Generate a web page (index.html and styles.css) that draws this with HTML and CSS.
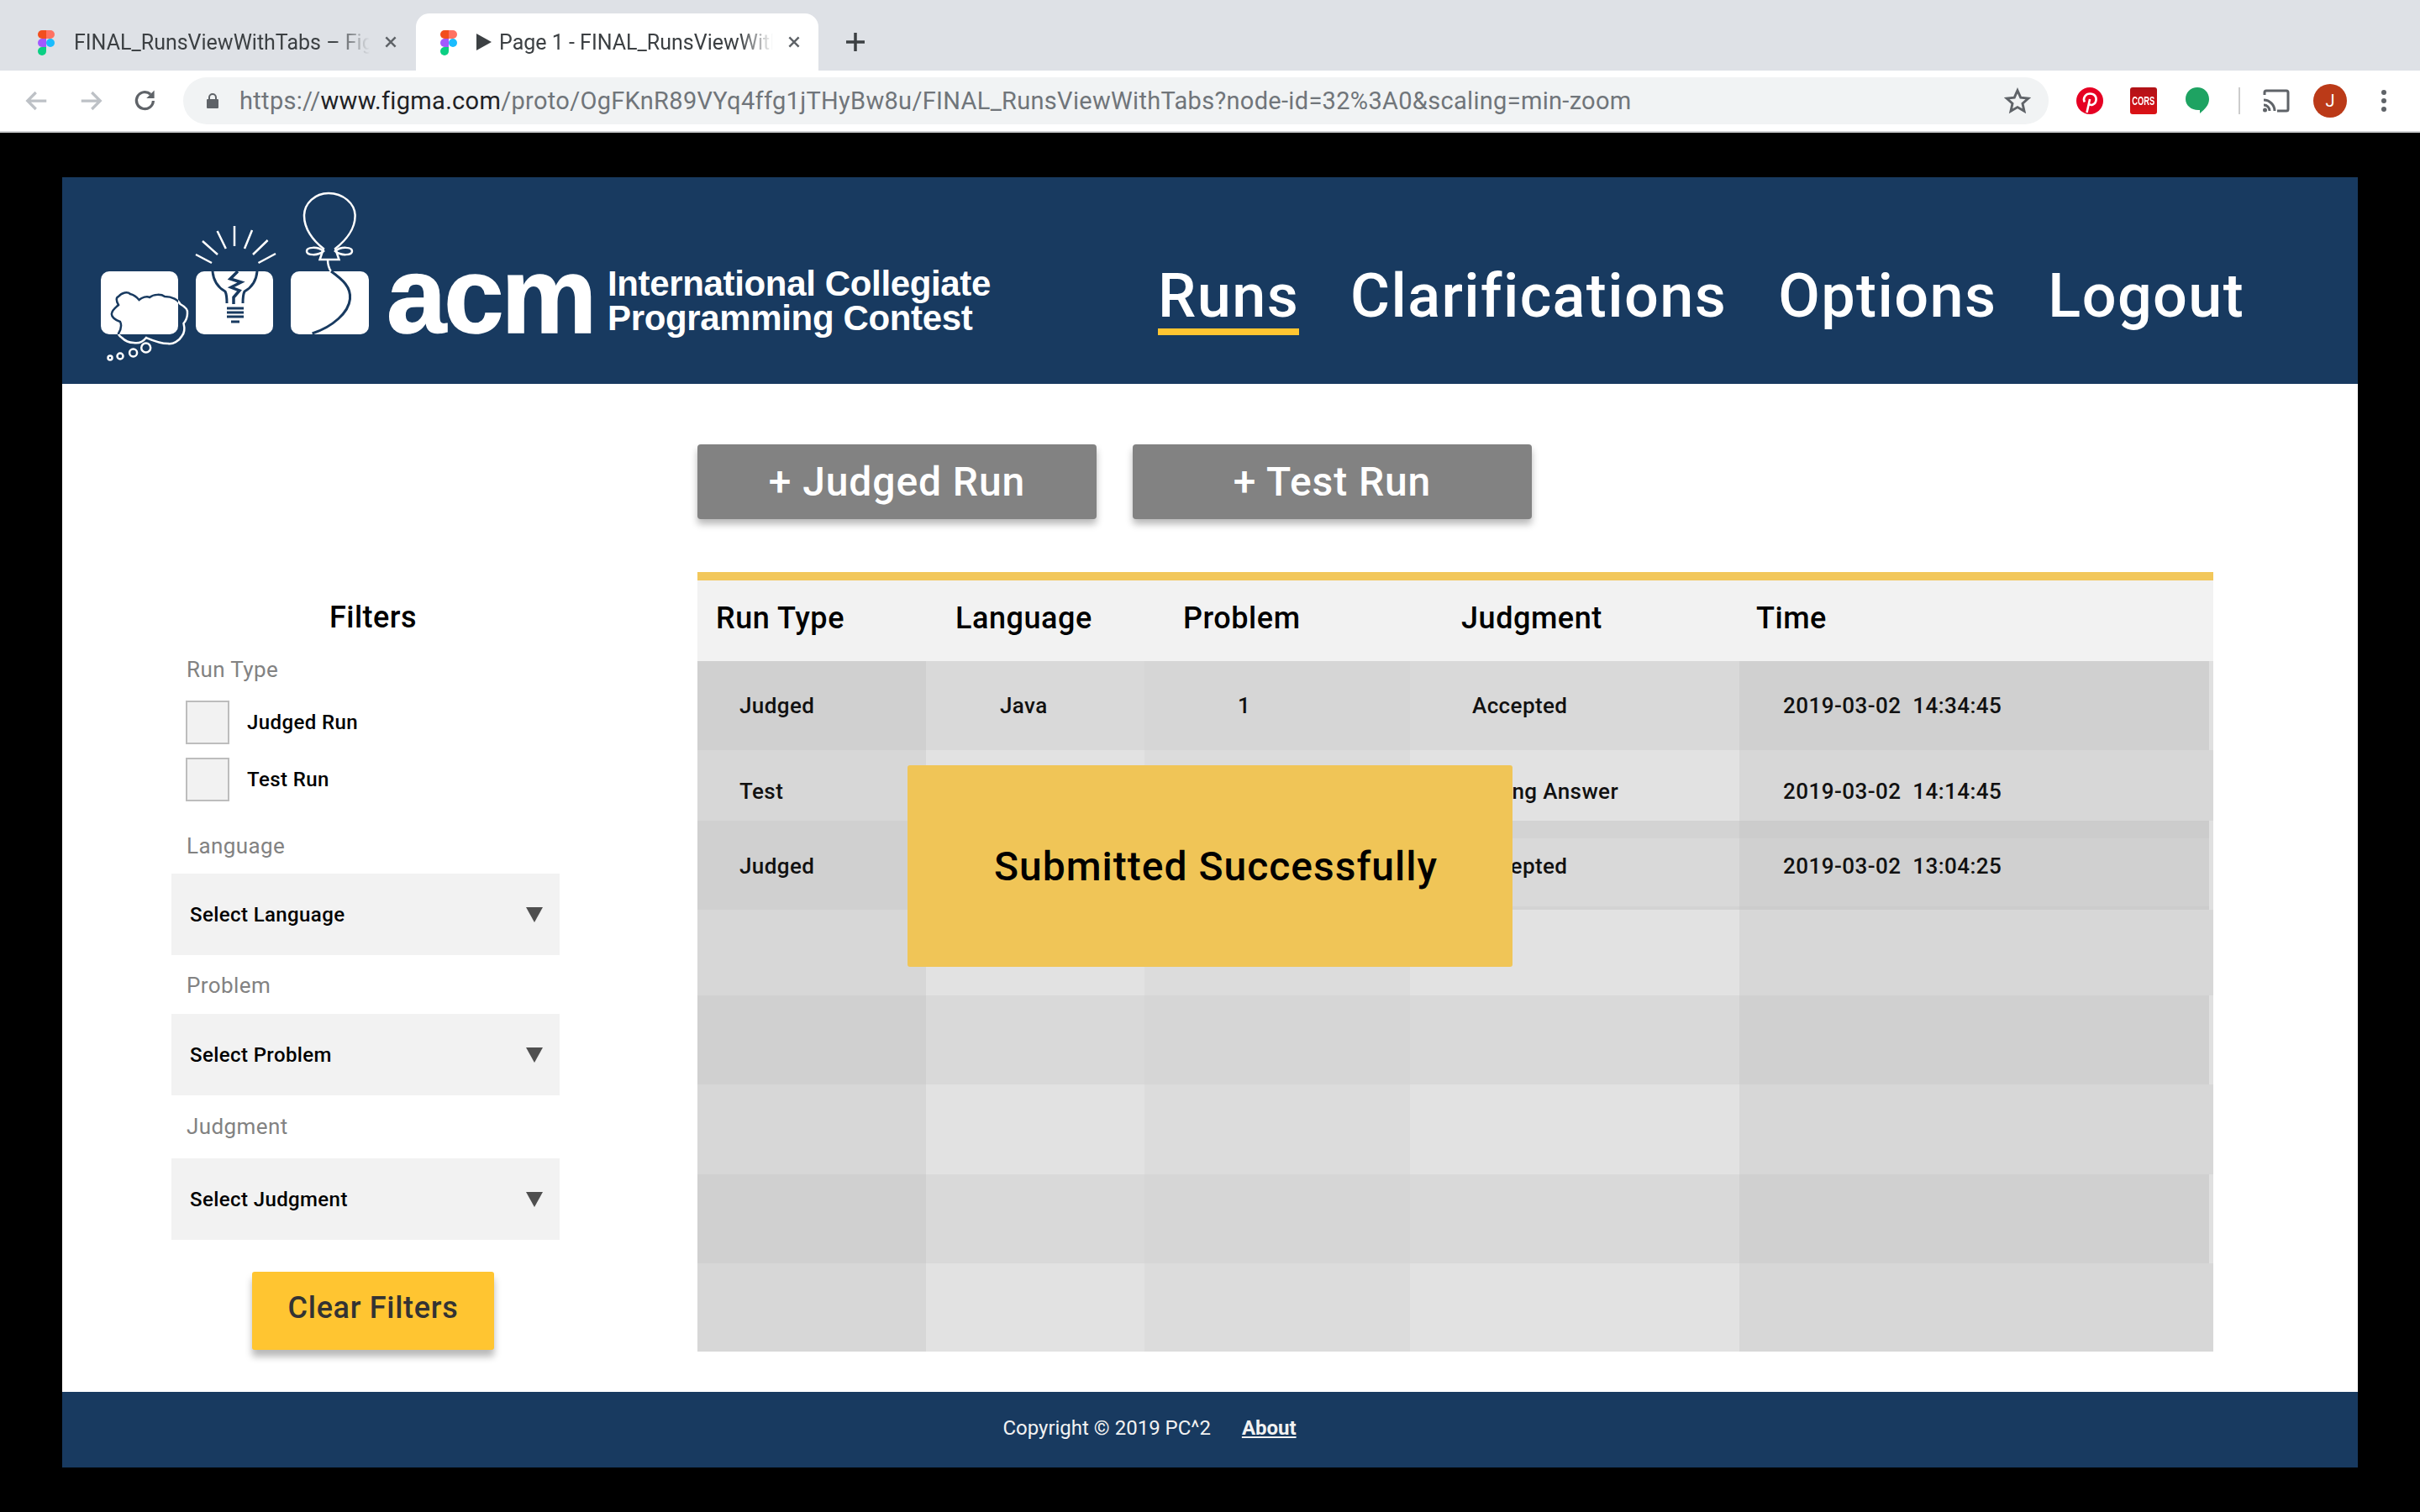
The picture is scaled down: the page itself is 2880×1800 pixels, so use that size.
FILE: index.html
```html
<!DOCTYPE html>
<html lang="en">
<head>
<meta charset="utf-8">
<title>Page 1 - FINAL_RunsViewWithTabs</title>
<link rel="stylesheet" href="styles.css">
</head>
<body>
<div class="tabstrip">
  <div class="tab">
    <svg class="figma" viewBox="0 0 20 30"><path fill="#f24e1e" d="M5 0h5v10H5a5 5 0 0 1 0-10z"/><path fill="#ff7262" d="M10 0h5a5 5 0 0 1 0 10h-5z"/><path fill="#a259ff" d="M5 10h5v10H5a5 5 0 0 1 0-10z"/><circle fill="#1abcfe" cx="15" cy="15" r="5"/><path fill="#0acf83" d="M5 20h5v5a5 5 0 1 1-5-5z"/></svg>
    <span class="tab-title fade">FINAL_RunsViewWithTabs – Figma</span>
    <svg class="close" viewBox="0 0 16 16"><path d="M3 3l10 10M13 3L3 13"/></svg>
  </div>
  <div class="tab active">
    <svg class="figma" viewBox="0 0 20 30"><path fill="#f24e1e" d="M5 0h5v10H5a5 5 0 0 1 0-10z"/><path fill="#ff7262" d="M10 0h5a5 5 0 0 1 0 10h-5z"/><path fill="#a259ff" d="M5 10h5v10H5a5 5 0 0 1 0-10z"/><circle fill="#1abcfe" cx="15" cy="15" r="5"/><path fill="#0acf83" d="M5 20h5v5a5 5 0 1 1-5-5z"/></svg>
    <svg class="play" viewBox="0 0 18 20"><path d="M0 0l18 10L0 20z"/></svg>
    <span class="tab-title active-title fade">Page 1 - FINAL_RunsViewWithTabs</span>
    <svg class="close" viewBox="0 0 16 16"><path d="M3 3l10 10M13 3L3 13"/></svg>
  </div>
  <svg class="newtab" viewBox="0 0 24 24"><path d="M12 1v22M1 12h22"/></svg>
</div>
<div class="toolbar">
  <svg class="nav-ic first" viewBox="0 0 24 24"><path d="M21 12H4M11 4l-8 8 8 8"/></svg>
  <svg class="nav-ic" viewBox="0 0 24 24"><path d="M3 12h17M13 4l8 8-8 8"/></svg>
  <svg class="nav-ic dark" viewBox="0 0 24 24"><path d="M19.500 12a8 8 0 1 1-2.600-6.200"/><path class="solid" d="M20.500 2v7.500H13z"/></svg>
  <div class="omnibox">
    <svg class="lock" viewBox="0 0 14 18"><path d="M2 7V5a5 5 0 0 1 10 0v2h1a1 1 0 0 1 1 1v9a1 1 0 0 1-1 1H1a1 1 0 0 1-1-1V8a1 1 0 0 1 1-1zm2 0h6V5a3 3 0 0 0-6 0z"/></svg>
    <div class="url">https://<b>www.figma.com</b>/proto/OgFKnR89VYq4ffg1jTHyBw8u/FINAL_RunsViewWithTabs?node-id=32%3A0&amp;scaling=min-zoom</div>
    <svg class="star" viewBox="0 0 24 24"><path d="M12 2.800l2.800 6.300 6.800.7-5.100 4.600 1.500 6.800-6-3.500-6 3.500 1.500-6.800-5.100-4.600 6.800-.7z"/></svg>
  </div>
  <div class="exts">
    <svg class="ext" viewBox="0 0 32 32"><circle cx="16" cy="16" r="16" fill="#e60023"/><path d="M12.500 30l3.600-16M9.800 17.500c-2.500-5.500 1.500-10 6.600-10 5 0 8 3.500 7 8.500-1 4.500-6 6.500-8.500 3.500" fill="none" stroke="#fff" stroke-width="2.600"/></svg>
    <div class="cors"><span>CORS</span></div>
    <svg class="ext" viewBox="0 0 32 32"><path fill="#1ea362" d="M16 0c8 0 14 6 14 14 0 7-5 12-11 17v-4C10 28 2 22 2 14 2 6 8 0 16 0z"/></svg>
    <div class="sep"></div>
    <svg class="cast" viewBox="0 0 32 28"><path class="cast-line" d="M2 7V4a2 2 0 0 1 2-2h24a2 2 0 0 1 2 2v20a2 2 0 0 1-2 2H17"/><path class="cast-line" d="M1 13c7 0 13 6 13 13M1 19c4 0 7 3 7 7"/><circle cx="2.500" cy="25" r="2.500" fill="#5f6368"/></svg>
    <div class="avatar">J</div>
    <div class="kebab"><i></i><i></i><i></i></div>
  </div>
</div>

<div class="artboard">
  <header class="site-head">
    <div class="logo">
      <svg class="logo-art" viewBox="0 0 340 220">
        <defs><clipPath id="box1"><rect x="10" y="103" width="92" height="75" rx="10"/></clipPath></defs>
        <path class="logo-line" d="M31 177C34 172 35 167 33 163 27 161 22 157 23 153 24 148 28 146 31 143 28 138 28 134 31 133 35 128 42 127 45 130 50 131 53 134 55.500 137 59 134 65 132 68 134 73 130 82 130 86 133 95 133 102 137 104.500 142 110 145 114 149 113 153 113 158 111 162 108.500 165 110 171 109 177 106.500 180 103 186 96 190 90 189 80 189 71 185 64 182 60 187 54 189 49 188 43 188 38 185 35 182 32 180 31 178 31 177Z"/>
        <rect class="logo-fill" x="10" y="103" width="92" height="75" rx="10"/>
        <rect class="logo-fill" x="123" y="103" width="92" height="75" rx="10"/>
        <rect class="logo-fill" x="236" y="103" width="93" height="75" rx="10"/>
        <path class="logo-ink thin" clip-path="url(#box1)" d="M31 177C34 172 35 167 33 163 27 161 22 157 23 153 24 148 28 146 31 143 28 138 28 134 31 133 35 128 42 127 45 130 50 131 53 134 55.500 137 59 134 65 132 68 134 73 130 82 130 86 133 95 133 102 137 104.500 142 110 145 114 149 113 153 113 158 111 162 108.500 165 110 171 109 177 106.500 180 103 186 96 190 90 189 80 189 71 185 64 182 60 187 54 189 49 188 43 188 38 185 35 182 32 180 31 178 31 177Z"/>
        <g class="logo-line">
          <circle cx="63.700" cy="194" r="5.500"/><circle cx="48.600" cy="200" r="4.500"/><circle cx="33" cy="204" r="3.500"/><circle cx="21" cy="206" r="2.500"/>
          <path d="M169 49v24M148.600 55l10.200 21M190 54l-9 22M131 67l18 16M208.600 66l-17.600 17M123 83l19 10M218 82l-20.500 11"/>
          <path d="M281 10C265 10 252 22 252 37 252 52 262 66 275 76L270.600 89H293.500L289 76C302 66 312.600 52 312.600 37 312.600 22 298 10 281 10Z"/>
          <path d="M275 79C268 73 255 74 255 79 255 84 268 85 275 79ZM289 79C296 73 309 74 309 79 309 84 296 85 289 79Z"/>
          <path d="M280 89C280 94 281 99 284 103"/>
        </g>
        <path class="logo-ink" d="M143 103C144 115 151 123 158 127 160 131 160 136 160 141M196 103C195 115 188 123 181 127 179 131 179 136 179 141"/>
        <path class="logo-ink bold" d="M173 103L164 112 177 116 165 122 175 126 168 134 168 142"/>
        <path class="logo-ink" d="M160 147H180M160 152H180M160 157H180M165 163H175"/>
        <path class="logo-ink" d="M284 103C298 113 308 122 306.500 136 305 152 286 169 261.600 177"/>
      </svg>
      <div class="acm">acm</div>
      <div class="contest"><span>International Collegiate</span><span>Programming Contest</span></div>
    </div>
    <nav class="tabs">
      <a class="tablink current">Runs</a>
      <a class="tablink">Clarifications</a>
      <a class="tablink">Options</a>
      <a class="tablink">Logout</a>
    </nav>
  </header>

  <main class="body">
    <aside class="filters">
      <h2 class="filters-title">Filters</h2>
      <div class="flabel first-label">Run Type</div>
      <label class="check"><span class="box"></span>Judged Run</label>
      <label class="check"><span class="box"></span>Test Run</label>
      <div class="flabel lang-label">Language</div>
      <div class="select">Select Language<span class="caret"></span></div>
      <div class="flabel prob-label">Problem</div>
      <div class="select">Select Problem<span class="caret"></span></div>
      <div class="flabel judg-label">Judgment</div>
      <div class="select">Select Judgment<span class="caret"></span></div>
      <button class="clear">Clear Filters</button>
    </aside>

    <section class="content">
      <div class="actions">
        <button class="action">+ Judged Run</button>
        <button class="action">+ Test Run</button>
      </div>
      <div class="table">
        <div class="row head"><div class="c c1">Run Type</div><div class="c c2">Language</div><div class="c c3">Problem</div><div class="c c4">Judgment</div><div class="c c5">Time</div></div>
        <div class="row dark r106"><div class="c c1">Judged</div><div class="c c2">Java</div><div class="c c3">1</div><div class="c c4">Accepted</div><div class="c c5">2019-03-02&nbsp; 14:34:45</div></div>
        <div class="row light r84 lower"><div class="c c1">Test</div><div class="c c2">Java</div><div class="c c3">1</div><div class="c c4">Wrong Answer</div><div class="c c5">2019-03-02&nbsp; 14:14:45</div></div>
        <div class="row band r21"><div class="c c1"></div><div class="c c2"></div><div class="c c3"></div><div class="c c4"></div><div class="c c5"></div></div>
        <div class="row dark r81 upper"><div class="c c1">Judged</div><div class="c c2">Java</div><div class="c c3">2</div><div class="c c4">Accepted</div><div class="c c5">2019-03-02&nbsp; 13:04:25</div></div>
        <div class="row band r4"><div class="c c1"></div><div class="c c2"></div><div class="c c3"></div><div class="c c4"></div><div class="c c5"></div></div>
        <div class="row light r102"><div class="c c1"></div><div class="c c2"></div><div class="c c3"></div><div class="c c4"></div><div class="c c5"></div></div>
        <div class="row dark r106"><div class="c c1"></div><div class="c c2"></div><div class="c c3"></div><div class="c c4"></div><div class="c c5"></div></div>
        <div class="row light r107"><div class="c c1"></div><div class="c c2"></div><div class="c c3"></div><div class="c c4"></div><div class="c c5"></div></div>
        <div class="row dark r106"><div class="c c1"></div><div class="c c2"></div><div class="c c3"></div><div class="c c4"></div><div class="c c5"></div></div>
        <div class="row light r105"><div class="c c1"></div><div class="c c2"></div><div class="c c3"></div><div class="c c4"></div><div class="c c5"></div></div>
      </div>
    </section>
    <div class="toast">Submitted Successfully</div>
  </main>

  <footer class="site-foot"><span>Copyright © 2019 PC^2</span><a class="about">About</a></footer>
</div>
</body>
</html>
```
FILE: styles.css
```css
* { box-sizing: border-box; }
html, body { margin: 0; height: 100%; }
body { background: #000; font-family: Roboto, "Liberation Sans", sans-serif; overflow: hidden; width: 2880px; height: 1800px; }

.tabstrip { height: 84px; background: #dee1e6; display: flex; align-items: flex-end; padding-left: 26px; }
.tab { width: 456px; height: 68px; display: flex; align-items: center; padding: 0 20px; flex: none; }
.tab:first-child { width: 463px; margin-right: 6px; padding: 0 15px 0 19px; }
.tab.active { background: #fff; border-radius: 16px 16px 0 0; width: 479px; padding-left: 29px; }
.figma { width: 20px; height: 30px; flex: none; margin-right: 23px; margin-top: 2px; }
.tab-title { font-size: 25px; color: #3c4043; white-space: nowrap; overflow: hidden; flex: 1; min-width: 0; }
.fade { -webkit-mask-image: linear-gradient(90deg, #000 88%, transparent 100%); mask-image: linear-gradient(90deg, #000 88%, transparent 100%); }
.play { width: 18px; height: 20px; flex: none; margin: 0 9px 0 0; fill: #3c4043; }
.close { width: 18px; height: 18px; margin-left: 16px; flex: none; stroke: #5f6368; stroke-width: 2.200; fill: none; }
.newtab { width: 24px; height: 24px; margin: 0 0 22px 32px; stroke: #3c4043; stroke-width: 3.500; fill: none; }

.toolbar { height: 74px; background: #fff; border-bottom: 2px solid #cfd0d2; display: flex; align-items: center; }
.nav-ic { width: 30px; height: 30px; margin-right: 34px; stroke: #bdc1c6; stroke-width: 2.600; fill: none; flex: none; }
.nav-ic.first { margin-left: 29px; }
.nav-ic.dark { stroke: #5f6368; margin: 0 30px 0 1px; }
.nav-ic .solid { fill: #5f6368; stroke: none; }
.omnibox { width: 2220px; height: 56px; border-radius: 28px; background: #f1f3f4; display: flex; align-items: center; padding: 0 21px 0 28px; flex: none; }
.lock { width: 14px; height: 18px; fill: #5f6368; flex: none; margin-right: 25px; }
.url { font-size: 29px; color: #70757a; flex: 1; white-space: nowrap; letter-spacing: .31px; }
.url b { font-weight: 400; color: #202124; }
.star { width: 32px; height: 32px; stroke: #5f6368; stroke-width: 2.200; fill: none; flex: none; }
.exts { display: flex; align-items: center; margin-left: 33px; }
.ext { width: 32px; height: 32px; flex: none; }
.cors { width: 32px; height: 32px; margin: 0 32px; background: linear-gradient(#b01217, #dc1216); border-radius: 3px; color: #fff; font: 700 15px/32px "Liberation Sans", sans-serif; display: flex; justify-content: center; overflow: hidden; }
.cors span { display: block; transform: scaleX(.62); }
.sep { width: 2px; height: 32px; background: #ccc; margin: 0 27px 0 33px; }
.cast { width: 32px; height: 28px; fill: none; flex: none; }
.cast-line { stroke: #5f6368; stroke-width: 3; fill: none; }
.avatar { width: 40px; height: 40px; border-radius: 50%; background: #bb3a18; color: #fff; font-size: 20px; line-height: 40px; text-align: center; margin-left: 28px; }
.kebab { display: flex; flex-direction: column; gap: 4px; margin-left: 41px; }
.kebab i { width: 6px; height: 6px; border-radius: 50%; background: #5f6368; display: block; }

.artboard { margin: 53px 74px 0; width: 2732px; height: 1536px; background: #fff; display: flex; flex-direction: column; }
.site-head { height: 246px; background: #183a60; display: flex; flex: none; }
.logo { display: flex; width: 1304px; flex: none; align-items: flex-start; }
.logo-art { width: 340px; height: 220px; margin: 9px 0 0 36px; flex: none; }
.logo-fill { fill: #fff; }
.logo-line, .logo-line * { fill: none; stroke: #fff; stroke-width: 2.500; }
.logo-ink { fill: none; stroke: #183a60; stroke-width: 3; }
.logo-ink.thin { stroke-width: 2.500; }
.logo-ink.bold { stroke-width: 3.500; }
.acm { width: 264px; margin: 66px 0 0 10px; font: 700 128px/150px "Liberation Sans", sans-serif; color: #fff; -webkit-text-stroke: 1.500px #fff; flex: none; letter-spacing: -3px; }
.contest { margin: 106px 0 0 -1px; display: flex; flex-direction: column; font: 700 42px/41px "Liberation Sans", sans-serif; color: #fff; letter-spacing: -.35px; white-space: nowrap; }
.tabs { display: flex; gap: 61px; height: 188px; }
.tablink { font-size: 72px; font-weight: 500; color: #fff; letter-spacing: 1.4px; height: 188px; display: flex; align-items: flex-end; line-height: 76px; border-bottom: 8px solid transparent; }
.tablink.current { border-bottom-color: #ffc531; }

.body { flex: 1; display: flex; position: relative; }
.filters { width: 756px; flex: none; display: flex; flex-direction: column; padding-left: 130px; }
.filters-title { margin: 0; padding: 254px 0 0 18px; font-size: 36px; line-height: 48px; font-weight: 500; color: #000; width: 462px; text-align: center; letter-spacing: .5px; }
.flabel { font-size: 26px; line-height: 34px; color: #828282; height: 34px; padding-left: 18px; letter-spacing: .4px; flex: none; }
.first-label { margin: 21px 0 20px; }
.lang-label { margin: 20px 0 16px; }
.prob-label { margin: 19px 0 17px; }
.judg-label { margin: 20px 0 21px; }
.check { display: flex; align-items: center; font-size: 24px; font-weight: 500; color: #000; height: 52px; margin: 0 0 16px 17px; letter-spacing: .4px; flex: none; }
.box { width: 52px; height: 52px; background: #f2f2f2; border: 2px solid #bdbdbd; margin-right: 21px; }
.select { width: 462px; height: 97px; background: #f2f2f2; display: flex; align-items: center; justify-content: space-between; padding: 0 20px 0 22px; font-size: 24px; font-weight: 500; color: #000; letter-spacing: .4px; flex: none; }
.caret { width: 0; height: 0; border-left: 10px solid transparent; border-right: 10px solid transparent; border-top: 18px solid #4f4f4f; }
.clear { width: 288px; height: 93px; background: #ffc531; border: 0; border-radius: 3px; margin: 38px 0 0 96px; font-family: Roboto, sans-serif; font-size: 36px; font-weight: 500; color: #333; box-shadow: 0 8px 8px rgba(0,0,0,.28); padding-bottom: 8px; letter-spacing: .7px; }

.content { display: flex; flex-direction: column; width: 1804px; flex: none; }
.actions { display: flex; gap: 43px; padding-top: 72px; height: 224px; flex: none; }
.action { width: 475px; height: 89px; background: #828282; color: #fff; border: 0; border-radius: 4px; font-family: Roboto, sans-serif; font-size: 48px; font-weight: 500; box-shadow: 0 6px 8px rgba(0,0,0,.28); letter-spacing: .9px; }
.table { border-top: 10px solid #f2c75b; width: 1804px; display: flex; flex-direction: column; }
.row { display: flex; flex: none; background: #e0e0e0; }
.c { height: 100%; display: flex; align-items: center; font-size: 26px; font-weight: 500; color: #111; letter-spacing: .4px; }
.c1 { width: 272px; padding-left: 50px; }
.c2 { width: 260px; padding-left: 88px; }
.c3 { width: 316px; padding-left: 111px; }
.c4 { width: 392px; padding-left: 74px; }
.c5 { width: 559px; padding-left: 52px; letter-spacing: .45px; }
.light .c5, .head .c5 { width: 564px; }
.head { height: 96px; background: #f2f2f2; }
.head .c { font-size: 36px; font-weight: 500; color: #000; padding-bottom: 6px; letter-spacing: .55px; }
.head .c1 { padding-left: 22px; }
.head .c2 { padding-left: 35px; }
.head .c3 { padding-left: 46px; }
.head .c4 { padding-left: 61px; }
.head .c5 { padding-left: 20px; }
.lower .c { padding-top: 14px; }
.upper .c { padding-bottom: 15px; }
.r106 { height: 106px; } .r84 { height: 84px; } .r21 { height: 21px; } .r81 { height: 81px; } .r4 { height: 4px; }
.r102 { height: 102px; } .r107 { height: 107px; } .r105 { height: 105px; }
.dark .c1, .dark .c5 { background: #d0d0d0; }
.dark .c2, .dark .c4 { background: #d9d9d9; }
.dark .c3 { background: #d6d6d6; }
.light .c1, .light .c5 { background: #d7d7d7; }
.light .c2, .light .c4 { background: #e2e2e2; }
.light .c3 { background: #dcdcdc; }
.band .c1 { background: #d0d0d0; }
.band .c5 { background: #cccccc; }
.band .c2, .band .c4 { background: #d3d3d3; }
.band .c3 { background: #d1d1d1; }
.toast { position: absolute; left: 1006px; top: 454px; width: 720px; height: 240px; padding-left: 14px; background: #f0c557; border-radius: 3px; display: flex; align-items: center; justify-content: center; font-size: 48px; font-weight: 500; color: #000; letter-spacing: 1px; }

.site-foot { height: 90px; background: #183a60; color: #f2f2f2; flex: none; display: flex; align-items: center; justify-content: center; gap: 37px; font-size: 24px; padding: 0 144px 4px 0; }
.about { font-weight: 700; text-decoration: underline; }
```
